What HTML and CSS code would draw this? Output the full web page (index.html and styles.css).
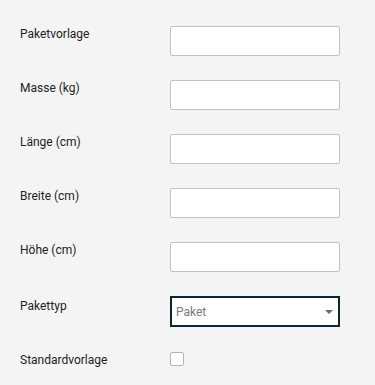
FILE: index.html
```html
<!DOCTYPE html>
<html lang="de">
<head>
    <meta charset="UTF-8">
    <meta name="viewport" content="width=device-width, initial-scale=1.0">
    <title>Paketvorlage</title>
    <link rel="stylesheet" href="styles.css">
</head>
<body>

    <form class="package-form">
        <div class="row">
            <label for="template">Paketvorlage</label>
            <input type="text" id="template">
        </div>
        <div class="row">
            <label for="mass">Masse (kg)</label>
            <input type="text" id="mass">
        </div>
        <div class="row">
            <label for="length">Länge (cm)</label>
            <input type="text" id="length">
        </div>
        <div class="row">
            <label for="width">Breite (cm)</label>
            <input type="text" id="width">
        </div>
        <div class="row">
            <label for="height">Höhe (cm)</label>
            <input type="text" id="height">
        </div>
        <div class="row row-select">
            <label for="type">Pakettyp</label>
            <div class="select-wrap">
                <select id="type">
                    <option>Paket</option>
                    <option>Brief</option>
                </select>
                <!-- dropdown arrow -->
                <svg class="arrow" width="8" height="4" viewBox="0 0 8 4"><path d="M0 0h8L4 4z" fill="#6b6b6b"/></svg>
            </div>
        </div>
        <div class="row row-check">
            <label for="default">Standardvorlage</label>
            <input type="checkbox" id="default">
        </div>
    </form>

</body>
</html>
```

FILE: styles.css
```css
body {
    font-family: Roboto, "Liberation Sans", Arial, sans-serif;
    margin: 0;
    padding: 0;
    background-color: #f4f4f4;
    color: #222;
}

.package-form {
    padding: 26px 0 0 20px;
    display: flex;
    flex-direction: column;
    gap: 24px;
}

.row {
    display: flex;
    align-items: flex-start;
}

.row label {
    width: 150px;
    font-size: 12px;
    line-height: 14px;
    padding-top: 1px;
}

.row input[type="text"] {
    width: 170px;
    height: 30px;
    box-sizing: border-box;
    border: 1px solid #c2c2c2;
    border-radius: 2px;
    background: #fff;
    margin: 0;
    outline: none;
}

.row-select label {
    padding-top: 3px;
}

.select-wrap {
    position: relative;
    width: 170px;
}

.select-wrap select {
    appearance: none;
    -webkit-appearance: none;
    width: 170px;
    height: 31px;
    box-sizing: border-box;
    border: 2px solid #0c2634;
    border-radius: 0;
    background: #fff;
    margin: 0;
    padding: 0 0 0 4px;
    font-family: Roboto, "Liberation Sans", Arial, sans-serif;
    font-size: 12px;
    color: #7a7a7a;
    outline: none;
}

.select-wrap .arrow {
    position: absolute;
    right: 7px;
    top: 14px;
}

.row-check {
    margin-top: 1px;
}

.row-check input[type="checkbox"] {
    appearance: none;
    -webkit-appearance: none;
    width: 14px;
    height: 14px;
    box-sizing: border-box;
    margin: 0;
    border: 1px solid #b5b5b5;
    border-radius: 2px;
    background: #fff;
}
```
